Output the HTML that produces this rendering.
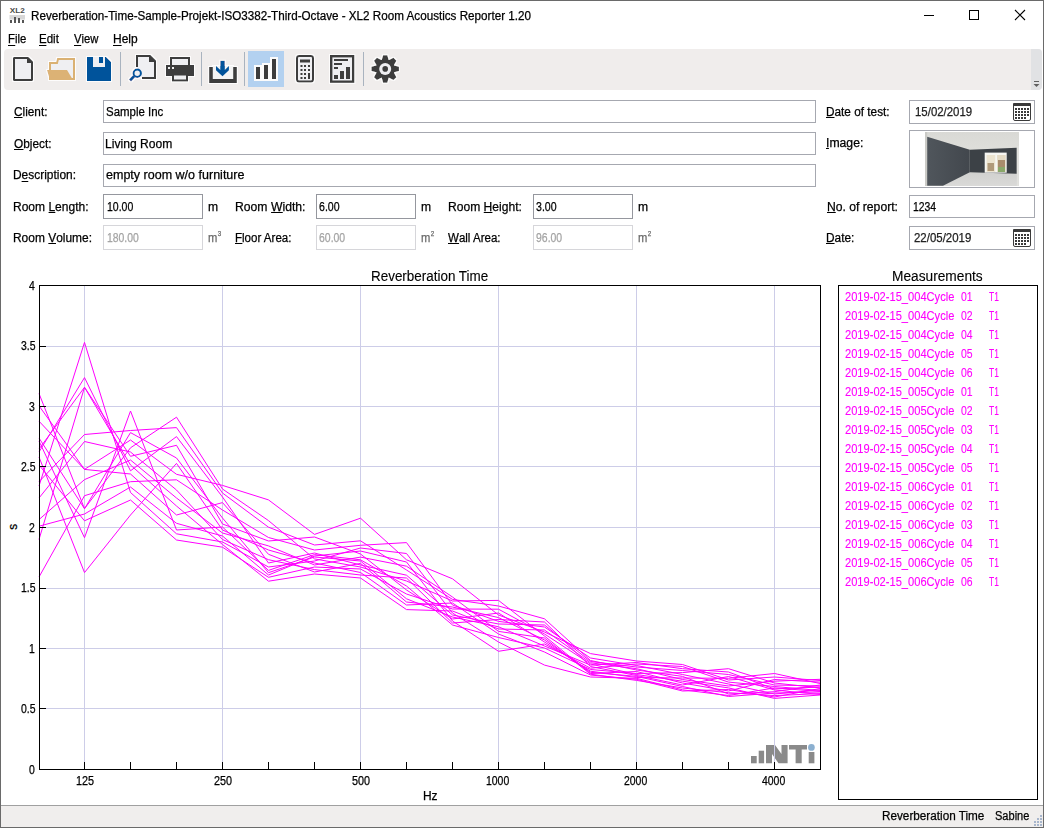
<!DOCTYPE html>
<html><head><meta charset="utf-8">
<style>
html,body{margin:0;padding:0;}
body{width:1044px;height:828px;position:relative;overflow:hidden;background:#fff;font-family:"Liberation Sans",sans-serif;color:#000;}
.a{position:absolute;}
.t{position:absolute;white-space:pre;transform-origin:0 0;-webkit-text-stroke:0.25px currentColor;}
u{text-decoration:none;position:relative;}
u:after{content:"";position:absolute;left:0;right:0;bottom:0.8px;height:1px;background:currentColor;}
.box{position:absolute;box-sizing:border-box;border:1px solid #b4b4bc;background:#fff;}
</style></head><body>

<svg class="a" style="left:0;top:0" width="1044" height="30">
  <text x="9.8" y="13.3" font-family="Liberation Sans" font-weight="bold" font-size="6.9" fill="#4a4a4a" textLength="15" lengthAdjust="spacingAndGlyphs">XL2</text>
  <rect x="9.5" y="15" width="15.5" height="4.6" fill="#d8d8d8"/>
  <rect x="10" y="20" width="2" height="3" fill="#555555"/>
  <rect x="14" y="17" width="2" height="6" fill="#555555"/>
  <rect x="18" y="18" width="2" height="5" fill="#555555"/>
  <rect x="22" y="20" width="2" height="3" fill="#555555"/>
  <rect x="924" y="15" width="10" height="1" fill="#000"/>
  <rect x="969.5" y="10.5" width="9" height="9" fill="none" stroke="#000" stroke-width="1"/>
  <path d="M1015 10 L1025 20 M1025 10 L1015 20" stroke="#000" stroke-width="1.1"/>
</svg>
<div class="t" style="left:31.00px;top:9.54px;font-size:12px;line-height:12px;color:#000;transform:scaleX(0.9720);">Reverberation-Time-Sample-Projekt-ISO3382-Third-Octave - XL2 Room Acoustics Reporter 1.20</div>
<div class="t" style="left:7.69px;top:33.42px;font-size:12.5px;line-height:12.5px;color:#000;transform:scaleX(0.9067);"><u>F</u>ile</div>
<div class="t" style="left:39.28px;top:33.42px;font-size:12.5px;line-height:12.5px;color:#000;transform:scaleX(0.9209);"><u>E</u>dit</div>
<div class="t" style="left:74.00px;top:33.42px;font-size:12.5px;line-height:12.5px;color:#000;transform:scaleX(0.9016);"><u>V</u>iew</div>
<div class="t" style="left:112.54px;top:33.42px;font-size:12.5px;line-height:12.5px;color:#000;transform:scaleX(0.9573);"><u>H</u>elp</div>
<div class="a" style="left:4px;top:49px;width:1038px;height:41px;background:#f0edec;border-radius:4px;overflow:hidden"><div class="a" style="right:0;top:0;width:11px;height:41px;background:#e1e2e4"></div></div>
<svg class="a" style="left:0;top:0" width="1044" height="95">
 <defs><filter id="halo" x="-20%" y="-20%" width="140%" height="140%"><feMorphology in="SourceAlpha" operator="dilate" radius="1.3" result="d"/><feGaussianBlur in="d" stdDeviation="0.7" result="b"/><feFlood flood-color="#ffffff" flood-opacity="0.85"/><feComposite in2="b" operator="in" result="w"/><feMerge><feMergeNode in="w"/><feMergeNode in="SourceGraphic"/></feMerge></filter></defs>
 <g filter="url(#halo)">
 <!-- new doc -->
 <path d="M14 58 H28 L32 62 V80 H14 Z" fill="#efeff2" stroke="#3c3c3c" stroke-width="2" stroke-linejoin="round"/>
 <path d="M27 57 L33 63 H27 Z" fill="#3c3c3c"/>
 <!-- folder -->
 <path d="M50 79 V63 H57 L58 59 H74 V79 Z" fill="#efeff2" stroke="#dab173" stroke-width="2"/>
 <path d="M47 70 H67 L73 80 H50 Z" fill="#dcb274"/>
 <!-- save -->
 <path d="M87 57 H106 L111 62 V81 H87 Z" fill="#00529b"/>
 <rect x="93" y="57" width="12" height="10" fill="#efeff2"/>
 <rect x="99" y="57" width="4" height="6" fill="#00529b"/>
 </g>
 <!-- separators -->
 <rect x="120" y="52" width="1" height="34" fill="#a9b3bf"/>
 <rect x="201" y="52" width="1" height="34" fill="#a9b3bf"/>
 <rect x="244" y="52" width="1" height="34" fill="#a9b3bf"/>
 <rect x="363" y="52" width="1" height="34" fill="#a9b3bf"/>
 <g filter="url(#halo)">
 <!-- preview -->
 <path d="M137 67 V56 H150 L155 61 V78 H142" fill="#efeff2" stroke="#3c3c3c" stroke-width="2"/>
 <path d="M149 55 L156 62 H149 Z" fill="#3c3c3c"/>
 <circle cx="137.2" cy="73.2" r="3.7" fill="#efeff2" stroke="#00529b" stroke-width="2"/>
 <path d="M134.3 76.1 L130 80.6" stroke="#00529b" stroke-width="2.9" stroke-linecap="butt"/>
 <!-- printer -->
 <rect x="171" y="58" width="18" height="8" fill="#efeff2" stroke="#3c3c3c" stroke-width="2"/>
 <rect x="166" y="65" width="28" height="11" fill="#3c3c3c"/>
 <rect x="173" y="74.5" width="14" height="6" fill="#efeff2" stroke="#3c3c3c" stroke-width="2"/>
 <rect x="168" y="67" width="2" height="2" fill="#f0f0f0"/>
 <rect x="172" y="67" width="2" height="2" fill="#f0f0f0"/>
 <!-- import -->
 <rect x="213" y="66" width="20" height="13" fill="#f4f4f4"/>
 <path d="M211 67 V81 H235 V67" fill="none" stroke="#3c3c3c" stroke-width="3.8"/>
 <path d="M220.3 60.8 H224.8 V70 L228.9 66 V70.3 L222.5 76.2 L216 70.3 V66 L220.3 70 Z" fill="#00529b"/>
 </g>
 <!-- selected chart button -->
 <rect x="248" y="51" width="36" height="36" fill="#b3d1f0"/>
 <path d="M254 65 H262 V63 H270 V57 H278 V81 H254 Z" fill="#fbfbfb"/>
 <rect x="256" y="67" width="4" height="12" fill="#3c3c3c"/>
 <rect x="264" y="65" width="4" height="14" fill="#3c3c3c"/>
 <rect x="272" y="59" width="4" height="20" fill="#3c3c3c"/>
 <g filter="url(#halo)">
 <!-- calculator -->
 <rect x="297" y="56" width="16" height="25.5" rx="2" fill="#efeff2" stroke="#3c3c3c" stroke-width="2"/>
 <rect x="300" y="59.5" width="10" height="3" fill="#3c3c3c"/>
 <g fill="#3c3c3c">
  <rect x="300.5" y="65" width="2" height="2"/><rect x="304" y="65" width="2" height="2"/><rect x="308" y="65" width="2" height="2"/>
  <rect x="300.5" y="69" width="2" height="2"/><rect x="304" y="69" width="2" height="2"/><rect x="308" y="69" width="2" height="2"/>
  <rect x="300.5" y="73" width="2" height="2"/><rect x="304" y="73" width="2" height="2"/><rect x="308" y="73" width="2" height="6"/>
  <rect x="300.5" y="77" width="2" height="2"/><rect x="304" y="77" width="2" height="2"/>
 </g>
 <!-- report -->
 <rect x="331.2" y="56.2" width="22" height="25.5" fill="#efeff2" stroke="#3c3c3c" stroke-width="2.4"/>
 <g fill="#3c3c3c">
  <rect x="334" y="59" width="14" height="2"/><rect x="334" y="63" width="8" height="2"/><rect x="334" y="67" width="4" height="2"/>
  <rect x="334" y="75" width="4" height="4"/><rect x="340" y="71" width="4" height="8"/><rect x="346" y="67" width="4" height="12"/>
 </g>
 <!-- gear -->
 <g transform="translate(385.2 68.9)">
  <path id="gear" fill="#3c3c3c" d="M-3.47 -8.95 L-2.08 -13.74 L2.08 -13.74 L3.47 -8.95 L3.87 -8.78 L8.25 -11.19 L11.19 -8.25 L8.78 -3.87 L8.95 -3.47 L13.74 -2.08 L13.74 2.08 L8.95 3.47 L8.78 3.87 L11.19 8.25 L8.25 11.19 L3.87 8.78 L3.47 8.95 L2.08 13.74 L-2.08 13.74 L-3.47 8.95 L-3.87 8.78 L-8.25 11.19 L-11.19 8.25 L-8.78 3.87 L-8.95 3.47 L-13.74 2.08 L-13.74 -2.08 L-8.95 -3.47 L-8.78 -3.87 L-11.19 -8.25 L-8.25 -11.19 L-3.87 -8.78 Z"/>
  <circle r="6" fill="#efeff2"/>
  <circle r="2.8" fill="#3c3c3c"/>
 </g>
 </g>
 <!-- overflow chevron -->
 <rect x="1034" y="81" width="5" height="1" fill="#606060"/>
 <path d="M1033.5 84 H1039.5 L1036.5 87 Z" fill="#606060"/>
</svg>
<div class="box" style="left:103px;top:100px;width:713px;height:23px;border-color:#a6a8b0"></div>
<div class="box" style="left:103px;top:132px;width:713px;height:23px;border-color:#a6a8b0"></div>
<div class="box" style="left:103px;top:164px;width:713px;height:23px;border-color:#a6a8b0"></div>
<div class="box" style="left:103px;top:194px;width:100px;height:25px;border-color:#95979e"></div>
<div class="box" style="left:316px;top:194px;width:100px;height:25px;border-color:#95979e"></div>
<div class="box" style="left:533px;top:194px;width:100px;height:25px;border-color:#95979e"></div>
<div class="box" style="left:103px;top:225px;width:100px;height:25px;border-color:#d6d6da"></div>
<div class="box" style="left:316px;top:225px;width:100px;height:25px;border-color:#d6d6da"></div>
<div class="box" style="left:533px;top:225px;width:100px;height:25px;border-color:#d6d6da"></div>
<div class="box" style="left:909px;top:100px;width:126px;height:24px;border-color:#a6a8b0"></div>
<div class="box" style="left:909px;top:130px;width:126px;height:58px;border-color:#a6a8b0"></div>
<div class="box" style="left:909px;top:195px;width:126px;height:23px;border-color:#a6a8b0"></div>
<div class="box" style="left:909px;top:226px;width:126px;height:24px;border-color:#a6a8b0"></div>
<div class="t" style="left:14.30px;top:105.62px;font-size:12.5px;line-height:12.5px;color:#000;transform:scaleX(0.9440);"><u>C</u>lient:</div>
<div class="t" style="left:14.30px;top:137.52px;font-size:12.5px;line-height:12.5px;color:#000;transform:scaleX(0.9456);"><u>O</u>bject:</div>
<div class="t" style="left:13.35px;top:169.42px;font-size:12.5px;line-height:12.5px;color:#000;transform:scaleX(0.9547);">D<u>e</u>scription:</div>
<div class="t" style="left:13.34px;top:200.62px;font-size:12.5px;line-height:12.5px;color:#000;transform:scaleX(0.9617);">Room <u>L</u>ength:</div>
<div class="t" style="left:13.34px;top:231.62px;font-size:12.5px;line-height:12.5px;color:#000;transform:scaleX(0.9552);">Room <u>V</u>olume:</div>
<div class="t" style="left:207.50px;top:200.62px;font-size:12.5px;line-height:12.5px;color:#000;transform:scaleX(0.9700);">m</div>
<div class="t" style="left:207.50px;top:231.62px;font-size:12.5px;line-height:12.5px;color:#6a6a6a;transform:scaleX(0.8950);">m<span style="font-size:7px;position:relative;top:-5.6px;left:0.6px">3</span></div>
<div class="t" style="left:234.62px;top:200.62px;font-size:12.5px;line-height:12.5px;color:#000;transform:scaleX(0.9750);">Room <u>W</u>idth:</div>
<div class="t" style="left:234.68px;top:231.62px;font-size:12.5px;line-height:12.5px;color:#000;transform:scaleX(0.9229);"><u>F</u>loor Area:</div>
<div class="t" style="left:420.70px;top:200.62px;font-size:12.5px;line-height:12.5px;color:#000;transform:scaleX(0.9700);">m</div>
<div class="t" style="left:420.70px;top:231.62px;font-size:12.5px;line-height:12.5px;color:#6a6a6a;transform:scaleX(0.8950);">m<span style="font-size:7px;position:relative;top:-5.6px;left:0.6px">2</span></div>
<div class="t" style="left:447.73px;top:200.62px;font-size:12.5px;line-height:12.5px;color:#000;transform:scaleX(0.9660);">Room <u>H</u>eight:</div>
<div class="t" style="left:448.40px;top:231.62px;font-size:12.5px;line-height:12.5px;color:#000;transform:scaleX(0.9221);"><u>W</u>all Area:</div>
<div class="t" style="left:637.70px;top:200.62px;font-size:12.5px;line-height:12.5px;color:#000;transform:scaleX(0.9700);">m</div>
<div class="t" style="left:637.70px;top:231.62px;font-size:12.5px;line-height:12.5px;color:#6a6a6a;transform:scaleX(0.8950);">m<span style="font-size:7px;position:relative;top:-5.6px;left:0.6px">2</span></div>
<div class="t" style="left:826.16px;top:105.62px;font-size:12.5px;line-height:12.5px;color:#000;transform:scaleX(0.9435);"><u>D</u>ate of test:</div>
<div class="t" style="left:825.82px;top:137.22px;font-size:12.5px;line-height:12.5px;color:#000;transform:scaleX(0.9771);"><u>I</u>mage:</div>
<div class="t" style="left:826.53px;top:200.62px;font-size:12.5px;line-height:12.5px;color:#000;transform:scaleX(0.9724);"><u>N</u>o. of report:</div>
<div class="t" style="left:825.85px;top:231.62px;font-size:12.5px;line-height:12.5px;color:#000;transform:scaleX(0.9471);"><u>D</u>ate:</div>
<div class="t" style="left:106.10px;top:105.62px;font-size:12.5px;line-height:12.5px;color:#000;transform:scaleX(0.9152);">Sample Inc</div>
<div class="t" style="left:105.13px;top:137.52px;font-size:12.5px;line-height:12.5px;color:#000;transform:scaleX(0.9682);">Living Room</div>
<div class="t" style="left:106.30px;top:169.42px;font-size:12.5px;line-height:12.5px;color:#000;transform:scaleX(1.0015);">empty room w/o furniture</div>
<div class="t" style="left:106.80px;top:200.62px;font-size:12.5px;line-height:12.5px;color:#000;transform:scaleX(0.8395);">10.00</div>
<div class="t" style="left:319.30px;top:200.62px;font-size:12.5px;line-height:12.5px;color:#000;transform:scaleX(0.8451);">6.00</div>
<div class="t" style="left:536.30px;top:200.62px;font-size:12.5px;line-height:12.5px;color:#000;transform:scaleX(0.8451);">3.00</div>
<div class="t" style="left:106.80px;top:231.62px;font-size:12.5px;line-height:12.5px;color:#a4a4a4;transform:scaleX(0.8307);">180.00</div>
<div class="t" style="left:319.30px;top:231.62px;font-size:12.5px;line-height:12.5px;color:#a4a4a4;transform:scaleX(0.8363);">60.00</div>
<div class="t" style="left:536.30px;top:231.62px;font-size:12.5px;line-height:12.5px;color:#a4a4a4;transform:scaleX(0.8363);">96.00</div>
<div class="t" style="left:914.50px;top:105.62px;font-size:12.5px;line-height:12.5px;color:#222;transform:scaleX(0.9136);">15/02/2019</div>
<div class="t" style="left:912.70px;top:200.62px;font-size:12.5px;line-height:12.5px;color:#000;transform:scaleX(0.8329);">1234</div>
<div class="t" style="left:914.40px;top:231.62px;font-size:12.5px;line-height:12.5px;color:#222;transform:scaleX(0.9152);">22/05/2019</div>
<svg class="a" style="left:1013px;top:103px" width="19" height="19"><rect x="0.5" y="0.5" width="17" height="17" rx="1.5" fill="#fff" stroke="#3a3a3a" stroke-width="1"/><rect x="0" y="0" width="18" height="3" rx="1" fill="#3a3a3a"/><rect x="2" y="5" width="2" height="2" fill="#3a3a3a"/><rect x="5" y="5" width="2" height="2" fill="#3a3a3a"/><rect x="8" y="5" width="2" height="2" fill="#3a3a3a"/><rect x="11" y="5" width="2" height="2" fill="#3a3a3a"/><rect x="14" y="5" width="2" height="2" fill="#3a3a3a"/><rect x="2" y="8" width="2" height="2" fill="#3a3a3a"/><rect x="5" y="8" width="2" height="2" fill="#3a3a3a"/><rect x="8" y="8" width="2" height="2" fill="#3a3a3a"/><rect x="11" y="8" width="2" height="2" fill="#3a3a3a"/><rect x="14" y="8" width="2" height="2" fill="#3a3a3a"/><rect x="2" y="11" width="2" height="2" fill="#3a3a3a"/><rect x="5" y="11" width="2" height="2" fill="#3a3a3a"/><rect x="8" y="11" width="2" height="2" fill="#3a3a3a"/><rect x="11" y="11" width="2" height="2" fill="#3a3a3a"/><rect x="14" y="11" width="2" height="2" fill="#3a3a3a"/><rect x="2" y="14" width="2" height="2" fill="#3a3a3a"/><rect x="5" y="14" width="2" height="2" fill="#3a3a3a"/><rect x="8" y="14" width="2" height="2" fill="#3a3a3a"/><rect x="11" y="14" width="2" height="2" fill="#3a3a3a"/></svg>
<svg class="a" style="left:1013px;top:229px" width="19" height="19"><rect x="0.5" y="0.5" width="17" height="17" rx="1.5" fill="#fff" stroke="#3a3a3a" stroke-width="1"/><rect x="0" y="0" width="18" height="3" rx="1" fill="#3a3a3a"/><rect x="2" y="5" width="2" height="2" fill="#3a3a3a"/><rect x="5" y="5" width="2" height="2" fill="#3a3a3a"/><rect x="8" y="5" width="2" height="2" fill="#3a3a3a"/><rect x="11" y="5" width="2" height="2" fill="#3a3a3a"/><rect x="14" y="5" width="2" height="2" fill="#3a3a3a"/><rect x="2" y="8" width="2" height="2" fill="#3a3a3a"/><rect x="5" y="8" width="2" height="2" fill="#3a3a3a"/><rect x="8" y="8" width="2" height="2" fill="#3a3a3a"/><rect x="11" y="8" width="2" height="2" fill="#3a3a3a"/><rect x="14" y="8" width="2" height="2" fill="#3a3a3a"/><rect x="2" y="11" width="2" height="2" fill="#3a3a3a"/><rect x="5" y="11" width="2" height="2" fill="#3a3a3a"/><rect x="8" y="11" width="2" height="2" fill="#3a3a3a"/><rect x="11" y="11" width="2" height="2" fill="#3a3a3a"/><rect x="14" y="11" width="2" height="2" fill="#3a3a3a"/><rect x="2" y="14" width="2" height="2" fill="#3a3a3a"/><rect x="5" y="14" width="2" height="2" fill="#3a3a3a"/><rect x="8" y="14" width="2" height="2" fill="#3a3a3a"/><rect x="11" y="14" width="2" height="2" fill="#3a3a3a"/></svg>
<svg class="a" style="left:925px;top:132px" width="94" height="54">
 <defs>
  <linearGradient id="lw" x1="0" x2="1" y1="0" y2="0"><stop offset="0" stop-color="#50565c"/><stop offset="1" stop-color="#42474d"/></linearGradient>
  <linearGradient id="cl" x1="0" x2="0" y1="0" y2="1"><stop offset="0" stop-color="#d9d9d5"/><stop offset="1" stop-color="#e9e9e5"/></linearGradient>
  <linearGradient id="fl" x1="0" x2="0" y1="0" y2="1"><stop offset="0" stop-color="#cfcfcd"/><stop offset="1" stop-color="#dadad8"/></linearGradient>
 </defs>
 <rect width="94" height="54" fill="url(#cl)"/>
 <rect x="0" y="38" width="94" height="16" fill="url(#fl)"/>
 <rect x="0" y="0" width="2.2" height="54" fill="#cacac6"/>
 <path d="M2.2 4.8 L44.8 17.7 L44.8 40.2 L18 53.8 L2.2 53.8 Z" fill="url(#lw)"/>
 <path d="M44.8 17.7 L91.8 15.8 L91.8 41.7 L44.8 40.2 Z" fill="#3c4146"/>
 <rect x="59.7" y="20.6" width="22" height="20.1" fill="#f6f6f2"/>
 <rect x="61.6" y="23" width="8.6" height="17" fill="#ece4d0"/>
 <rect x="72.1" y="23" width="8.6" height="17" fill="#e4dac4"/>
 <rect x="62.5" y="31" width="6.5" height="8" fill="#b09a7a"/>
 <rect x="73" y="28" width="7" height="7" fill="#a88c6c"/>
 <rect x="73" y="35" width="7" height="5" fill="#8aa86a"/>
 <rect x="91.8" y="14" width="2" height="40" fill="#e2e2de"/>
</svg>
<svg class="a" style="left:0;top:0" width="1044" height="828">
<g fill="#8a8a8a">
 <rect x="751" y="756" width="5.7" height="7.3"/>
 <rect x="758.7" y="750.7" width="5.4" height="12.6"/>
 <path d="M766 745 H775 L781.5 754 V745 H787.6 V763.3 H778.5 L772 754 V763.3 H766 Z"/>
 <path d="M789 745 H807 V749.6 H801.7 V763.3 H795.6 V749.6 H789 Z"/>
 <rect x="808.7" y="752" width="5.7" height="11.3"/>
</g>
<circle cx="811.4" cy="747.4" r="3.35" fill="#8cb0d0"/>
<line x1="45" y1="708.5" x2="820" y2="708.5" stroke="#cdcde8" stroke-width="1"/>
<line x1="45" y1="648.5" x2="820" y2="648.5" stroke="#cdcde8" stroke-width="1"/>
<line x1="45" y1="588.5" x2="820" y2="588.5" stroke="#cdcde8" stroke-width="1"/>
<line x1="45" y1="527.5" x2="820" y2="527.5" stroke="#cdcde8" stroke-width="1"/>
<line x1="45" y1="466.5" x2="820" y2="466.5" stroke="#cdcde8" stroke-width="1"/>
<line x1="45" y1="406.5" x2="820" y2="406.5" stroke="#cdcde8" stroke-width="1"/>
<line x1="45" y1="346.5" x2="820" y2="346.5" stroke="#cdcde8" stroke-width="1"/>
<line x1="84.5" y1="285" x2="84.5" y2="762" stroke="#cdcde8" stroke-width="1"/>
<line x1="222.5" y1="285" x2="222.5" y2="762" stroke="#cdcde8" stroke-width="1"/>
<line x1="360.5" y1="285" x2="360.5" y2="762" stroke="#cdcde8" stroke-width="1"/>
<line x1="498.5" y1="285" x2="498.5" y2="762" stroke="#cdcde8" stroke-width="1"/>
<line x1="636.5" y1="285" x2="636.5" y2="762" stroke="#cdcde8" stroke-width="1"/>
<line x1="774.5" y1="285" x2="774.5" y2="762" stroke="#cdcde8" stroke-width="1"/>
<polyline points="39.00,486.00 84.50,342.40 130.50,492.50 176.50,533.80 222.50,542.00 268.50,567.00 314.50,561.00 360.50,548.00 406.50,553.50 452.50,613.00 498.50,642.00 544.50,665.10 590.50,677.00 636.50,678.30 682.50,689.80 728.50,695.50 774.50,687.90 820.00,691.50" fill="none" stroke="#ff00ff" stroke-width="1"/>
<polyline points="39.00,452.00 84.50,377.60 130.50,470.80 176.50,436.60 222.50,497.00 268.50,563.00 314.50,553.00 360.50,565.00 406.50,575.20 452.50,615.00 498.50,624.00 544.50,625.00 590.50,661.50 636.50,667.00 682.50,670.50 728.50,674.50 774.50,685.00 820.00,686.00" fill="none" stroke="#ff00ff" stroke-width="1"/>
<polyline points="39.00,449.00 84.50,387.30 130.50,465.00 176.50,506.00 222.50,544.50 268.50,581.20 314.50,574.00 360.50,578.00 406.50,609.60 452.50,611.00 498.50,629.00 544.50,630.00 590.50,662.80 636.50,668.70 682.50,679.50 728.50,686.00 774.50,681.20 820.00,679.30" fill="none" stroke="#ff00ff" stroke-width="1"/>
<polyline points="39.00,539.50 84.50,387.30 130.50,456.30 176.50,445.30 222.50,524.00 268.50,541.00 314.50,537.00 360.50,554.00 406.50,590.00 452.50,619.00 498.50,613.00 544.50,642.00 590.50,671.20 636.50,677.50 682.50,678.00 728.50,678.30 774.50,673.50 820.00,683.50" fill="none" stroke="#ff00ff" stroke-width="1"/>
<polyline points="39.00,393.50 84.50,508.70 130.50,432.60 176.50,458.00 222.50,518.00 268.50,572.70 314.50,557.00 360.50,561.00 406.50,598.80 452.50,617.00 498.50,626.80 544.50,646.00 590.50,665.10 636.50,662.50 682.50,668.70 728.50,672.00 774.50,689.00 820.00,687.00" fill="none" stroke="#ff00ff" stroke-width="1"/>
<polyline points="39.00,405.80 84.50,469.40 130.50,440.00 176.50,474.30 222.50,485.40 268.50,499.90 314.50,534.40 360.50,518.20 406.50,559.80 452.50,578.80 498.50,615.00 544.50,632.00 590.50,653.60 636.50,661.00 682.50,664.50 728.50,680.00 774.50,677.00 820.00,680.50" fill="none" stroke="#ff00ff" stroke-width="1"/>
<polyline points="39.00,421.20 84.50,469.40 130.50,474.00 176.50,515.00 222.50,502.60 268.50,554.30 314.50,572.00 360.50,563.40 406.50,602.00 452.50,607.00 498.50,617.60 544.50,640.00 590.50,672.30 636.50,676.40 682.50,686.50 728.50,696.50 774.50,693.00 820.00,692.00" fill="none" stroke="#ff00ff" stroke-width="1"/>
<polyline points="39.00,438.00 84.50,508.70 130.50,447.80 176.50,417.20 222.50,489.00 268.50,520.60 314.50,558.90 360.50,567.00 406.50,581.00 452.50,601.00 498.50,600.40 544.50,636.00 590.50,673.50 636.50,671.50 682.50,683.00 728.50,691.00 774.50,679.50 820.00,682.10" fill="none" stroke="#ff00ff" stroke-width="1"/>
<polyline points="39.00,481.70 84.50,434.50 130.50,430.50 176.50,427.60 222.50,493.00 268.50,527.20 314.50,545.00 360.50,540.80 406.50,570.00 452.50,599.40 498.50,606.00 544.50,618.80 590.50,660.50 636.50,670.00 682.50,676.40 728.50,694.00 774.50,691.70 820.00,685.00" fill="none" stroke="#ff00ff" stroke-width="1"/>
<polyline points="39.00,498.00 84.50,441.50 130.50,452.00 176.50,490.00 222.50,539.50 268.50,559.70 314.50,569.60 360.50,575.00 406.50,578.00 452.50,623.00 498.50,619.50 544.50,622.00 590.50,666.50 636.50,675.50 682.50,685.00 728.50,676.50 774.50,690.00 820.00,694.50" fill="none" stroke="#ff00ff" stroke-width="1"/>
<polyline points="39.00,577.00 84.50,495.70 130.50,481.70 176.50,479.80 222.50,510.00 268.50,537.50 314.50,550.00 360.50,545.30 406.50,542.60 452.50,605.00 498.50,621.40 544.50,627.00 590.50,658.00 636.50,665.50 682.50,674.50 728.50,684.00 774.50,694.00 820.00,689.80" fill="none" stroke="#ff00ff" stroke-width="1"/>
<polyline points="39.00,457.00 84.50,572.60 130.50,515.00 176.50,463.40 222.50,530.00 268.50,550.00 314.50,563.00 360.50,572.50 406.50,605.00 452.50,603.00 498.50,634.00 544.50,652.00 590.50,675.00 636.50,679.30 682.50,691.00 728.50,689.50 774.50,697.00 820.00,688.50" fill="none" stroke="#ff00ff" stroke-width="1"/>
<polyline points="39.00,441.00 84.50,537.70 130.50,411.00 176.50,530.00 222.50,527.00 268.50,570.40 314.50,554.60 360.50,559.80 406.50,586.00 452.50,625.00 498.50,637.50 544.50,648.00 590.50,669.50 636.50,673.50 682.50,672.60 728.50,668.70 774.50,683.00 820.00,687.90" fill="none" stroke="#ff00ff" stroke-width="1"/>
<polyline points="39.00,519.60 84.50,479.60 130.50,460.00 176.50,498.00 222.50,533.00 268.50,545.90 314.50,565.00 360.50,557.10 406.50,566.20 452.50,597.00 498.50,631.40 544.50,638.00 590.50,674.20 636.50,680.40 682.50,688.00 728.50,692.70 774.50,695.60 820.00,693.60" fill="none" stroke="#ff00ff" stroke-width="1"/>
<polyline points="39.00,526.20 84.50,514.00 130.50,487.00 176.50,523.30 222.50,536.00 268.50,575.00 314.50,556.00 360.50,551.00 406.50,562.00 452.50,621.00 498.50,651.30 544.50,644.00 590.50,668.20 636.50,664.00 682.50,666.50 728.50,682.10 774.50,686.50 820.00,690.50" fill="none" stroke="#ff00ff" stroke-width="1"/>
<polyline points="39.00,465.00 84.50,520.80 130.50,500.00 176.50,540.00 222.50,547.20 268.50,577.30 314.50,567.00 360.50,569.00 406.50,594.00 452.50,609.00 498.50,609.20 544.50,634.00 590.50,664.00 636.50,674.50 682.50,681.20 728.50,687.90 774.50,698.40 820.00,695.00" fill="none" stroke="#ff00ff" stroke-width="1"/>
<rect x="39.5" y="285.5" width="781" height="484" fill="none" stroke="#000" stroke-width="1"/>
<line x1="39" y1="708.5" x2="46" y2="708.5" stroke="#000" stroke-width="1"/>
<line x1="39" y1="648.5" x2="46" y2="648.5" stroke="#000" stroke-width="1"/>
<line x1="39" y1="588.5" x2="46" y2="588.5" stroke="#000" stroke-width="1"/>
<line x1="39" y1="527.5" x2="46" y2="527.5" stroke="#000" stroke-width="1"/>
<line x1="39" y1="466.5" x2="46" y2="466.5" stroke="#000" stroke-width="1"/>
<line x1="39" y1="406.5" x2="46" y2="406.5" stroke="#000" stroke-width="1"/>
<line x1="39" y1="346.5" x2="46" y2="346.5" stroke="#000" stroke-width="1"/>
<line x1="84.5" y1="762" x2="84.5" y2="769" stroke="#000" stroke-width="1"/>
<line x1="130.5" y1="762" x2="130.5" y2="769" stroke="#000" stroke-width="1"/>
<line x1="176.5" y1="762" x2="176.5" y2="769" stroke="#000" stroke-width="1"/>
<line x1="222.5" y1="762" x2="222.5" y2="769" stroke="#000" stroke-width="1"/>
<line x1="268.5" y1="762" x2="268.5" y2="769" stroke="#000" stroke-width="1"/>
<line x1="314.5" y1="762" x2="314.5" y2="769" stroke="#000" stroke-width="1"/>
<line x1="360.5" y1="762" x2="360.5" y2="769" stroke="#000" stroke-width="1"/>
<line x1="406.5" y1="762" x2="406.5" y2="769" stroke="#000" stroke-width="1"/>
<line x1="452.5" y1="762" x2="452.5" y2="769" stroke="#000" stroke-width="1"/>
<line x1="498.5" y1="762" x2="498.5" y2="769" stroke="#000" stroke-width="1"/>
<line x1="544.5" y1="762" x2="544.5" y2="769" stroke="#000" stroke-width="1"/>
<line x1="590.5" y1="762" x2="590.5" y2="769" stroke="#000" stroke-width="1"/>
<line x1="636.5" y1="762" x2="636.5" y2="769" stroke="#000" stroke-width="1"/>
<line x1="682.5" y1="762" x2="682.5" y2="769" stroke="#000" stroke-width="1"/>
<line x1="728.5" y1="762" x2="728.5" y2="769" stroke="#000" stroke-width="1"/>
<line x1="774.5" y1="762" x2="774.5" y2="769" stroke="#000" stroke-width="1"/>
<rect x="838.5" y="285.5" width="199" height="514" fill="none" stroke="#000" stroke-width="1"/>
</svg>
<div class="t" style="left:29.21px;top:763.84px;font-size:12px;line-height:12px;color:#000;transform:scaleX(0.8700);">0</div>
<div class="t" style="left:20.50px;top:703.34px;font-size:12px;line-height:12px;color:#000;transform:scaleX(0.8700);">0.5</div>
<div class="t" style="left:29.21px;top:642.84px;font-size:12px;line-height:12px;color:#000;transform:scaleX(0.8700);">1</div>
<div class="t" style="left:20.50px;top:582.34px;font-size:12px;line-height:12px;color:#000;transform:scaleX(0.8700);">1.5</div>
<div class="t" style="left:29.21px;top:521.84px;font-size:12px;line-height:12px;color:#000;transform:scaleX(0.8700);">2</div>
<div class="t" style="left:20.50px;top:461.34px;font-size:12px;line-height:12px;color:#000;transform:scaleX(0.8700);">2.5</div>
<div class="t" style="left:29.21px;top:400.84px;font-size:12px;line-height:12px;color:#000;transform:scaleX(0.8700);">3</div>
<div class="t" style="left:20.50px;top:340.34px;font-size:12px;line-height:12px;color:#000;transform:scaleX(0.8700);">3.5</div>
<div class="t" style="left:29.21px;top:279.84px;font-size:12px;line-height:12px;color:#000;transform:scaleX(0.8700);">4</div>
<div class="t" style="left:76.34px;top:774.74px;font-size:12px;line-height:12px;color:#000;transform:scaleX(0.9000);">125</div>
<div class="t" style="left:214.34px;top:774.74px;font-size:12px;line-height:12px;color:#000;transform:scaleX(0.9000);">250</div>
<div class="t" style="left:352.34px;top:774.74px;font-size:12px;line-height:12px;color:#000;transform:scaleX(0.9000);">500</div>
<div class="t" style="left:486.45px;top:774.74px;font-size:12px;line-height:12px;color:#000;transform:scaleX(0.8700);">1000</div>
<div class="t" style="left:624.45px;top:774.74px;font-size:12px;line-height:12px;color:#000;transform:scaleX(0.8700);">2000</div>
<div class="t" style="left:762.45px;top:774.74px;font-size:12px;line-height:12px;color:#000;transform:scaleX(0.8700);">4000</div>
<div class="t" style="left:422.64px;top:790.22px;font-size:12.5px;line-height:12.5px;color:#000;transform:scaleX(0.9553);">Hz</div>
<div class="t" style="left:8px;top:521px;font-size:12.5px;line-height:12.5px;transform:rotate(-90deg) scaleX(0.94);transform-origin:4px 5px">s</div>
<div class="t" style="left:370.84px;top:269.05px;font-size:14px;line-height:14px;color:#000;transform:scaleX(0.9595);-webkit-text-stroke:0.12px #000;">Reverberation Time</div>
<div class="t" style="left:891.62px;top:268.65px;font-size:14px;line-height:14px;color:#000;transform:scaleX(0.9793);-webkit-text-stroke:0.12px #000;">Measurements</div>
<div class="t" style="left:845.00px;top:290.94px;font-size:12px;line-height:12px;color:#ff00ff;transform:scaleX(0.9264);-webkit-text-stroke:0.1px #ff00ff;">2019-02-15_004Cycle</div>
<div class="t" style="left:960.70px;top:290.94px;font-size:12px;line-height:12px;color:#ff00ff;transform:scaleX(0.8700);-webkit-text-stroke:0.1px #ff00ff;">01</div>
<div class="t" style="left:988.90px;top:290.94px;font-size:12px;line-height:12px;color:#ff00ff;transform:scaleX(0.7048);-webkit-text-stroke:0.1px #ff00ff;">T1</div>
<div class="t" style="left:845.00px;top:309.94px;font-size:12px;line-height:12px;color:#ff00ff;transform:scaleX(0.9264);-webkit-text-stroke:0.1px #ff00ff;">2019-02-15_004Cycle</div>
<div class="t" style="left:960.70px;top:309.94px;font-size:12px;line-height:12px;color:#ff00ff;transform:scaleX(0.8700);-webkit-text-stroke:0.1px #ff00ff;">02</div>
<div class="t" style="left:988.90px;top:309.94px;font-size:12px;line-height:12px;color:#ff00ff;transform:scaleX(0.7048);-webkit-text-stroke:0.1px #ff00ff;">T1</div>
<div class="t" style="left:845.00px;top:328.94px;font-size:12px;line-height:12px;color:#ff00ff;transform:scaleX(0.9264);-webkit-text-stroke:0.1px #ff00ff;">2019-02-15_004Cycle</div>
<div class="t" style="left:960.70px;top:328.94px;font-size:12px;line-height:12px;color:#ff00ff;transform:scaleX(0.8700);-webkit-text-stroke:0.1px #ff00ff;">04</div>
<div class="t" style="left:988.90px;top:328.94px;font-size:12px;line-height:12px;color:#ff00ff;transform:scaleX(0.7048);-webkit-text-stroke:0.1px #ff00ff;">T1</div>
<div class="t" style="left:845.00px;top:347.94px;font-size:12px;line-height:12px;color:#ff00ff;transform:scaleX(0.9264);-webkit-text-stroke:0.1px #ff00ff;">2019-02-15_004Cycle</div>
<div class="t" style="left:960.70px;top:347.94px;font-size:12px;line-height:12px;color:#ff00ff;transform:scaleX(0.8700);-webkit-text-stroke:0.1px #ff00ff;">05</div>
<div class="t" style="left:988.90px;top:347.94px;font-size:12px;line-height:12px;color:#ff00ff;transform:scaleX(0.7048);-webkit-text-stroke:0.1px #ff00ff;">T1</div>
<div class="t" style="left:845.00px;top:366.94px;font-size:12px;line-height:12px;color:#ff00ff;transform:scaleX(0.9264);-webkit-text-stroke:0.1px #ff00ff;">2019-02-15_004Cycle</div>
<div class="t" style="left:960.70px;top:366.94px;font-size:12px;line-height:12px;color:#ff00ff;transform:scaleX(0.8700);-webkit-text-stroke:0.1px #ff00ff;">06</div>
<div class="t" style="left:988.90px;top:366.94px;font-size:12px;line-height:12px;color:#ff00ff;transform:scaleX(0.7048);-webkit-text-stroke:0.1px #ff00ff;">T1</div>
<div class="t" style="left:845.00px;top:385.94px;font-size:12px;line-height:12px;color:#ff00ff;transform:scaleX(0.9264);-webkit-text-stroke:0.1px #ff00ff;">2019-02-15_005Cycle</div>
<div class="t" style="left:960.70px;top:385.94px;font-size:12px;line-height:12px;color:#ff00ff;transform:scaleX(0.8700);-webkit-text-stroke:0.1px #ff00ff;">01</div>
<div class="t" style="left:988.90px;top:385.94px;font-size:12px;line-height:12px;color:#ff00ff;transform:scaleX(0.7048);-webkit-text-stroke:0.1px #ff00ff;">T1</div>
<div class="t" style="left:845.00px;top:404.94px;font-size:12px;line-height:12px;color:#ff00ff;transform:scaleX(0.9264);-webkit-text-stroke:0.1px #ff00ff;">2019-02-15_005Cycle</div>
<div class="t" style="left:960.70px;top:404.94px;font-size:12px;line-height:12px;color:#ff00ff;transform:scaleX(0.8700);-webkit-text-stroke:0.1px #ff00ff;">02</div>
<div class="t" style="left:988.90px;top:404.94px;font-size:12px;line-height:12px;color:#ff00ff;transform:scaleX(0.7048);-webkit-text-stroke:0.1px #ff00ff;">T1</div>
<div class="t" style="left:845.00px;top:423.94px;font-size:12px;line-height:12px;color:#ff00ff;transform:scaleX(0.9264);-webkit-text-stroke:0.1px #ff00ff;">2019-02-15_005Cycle</div>
<div class="t" style="left:960.70px;top:423.94px;font-size:12px;line-height:12px;color:#ff00ff;transform:scaleX(0.8700);-webkit-text-stroke:0.1px #ff00ff;">03</div>
<div class="t" style="left:988.90px;top:423.94px;font-size:12px;line-height:12px;color:#ff00ff;transform:scaleX(0.7048);-webkit-text-stroke:0.1px #ff00ff;">T1</div>
<div class="t" style="left:845.00px;top:442.94px;font-size:12px;line-height:12px;color:#ff00ff;transform:scaleX(0.9264);-webkit-text-stroke:0.1px #ff00ff;">2019-02-15_005Cycle</div>
<div class="t" style="left:960.70px;top:442.94px;font-size:12px;line-height:12px;color:#ff00ff;transform:scaleX(0.8700);-webkit-text-stroke:0.1px #ff00ff;">04</div>
<div class="t" style="left:988.90px;top:442.94px;font-size:12px;line-height:12px;color:#ff00ff;transform:scaleX(0.7048);-webkit-text-stroke:0.1px #ff00ff;">T1</div>
<div class="t" style="left:845.00px;top:461.94px;font-size:12px;line-height:12px;color:#ff00ff;transform:scaleX(0.9264);-webkit-text-stroke:0.1px #ff00ff;">2019-02-15_005Cycle</div>
<div class="t" style="left:960.70px;top:461.94px;font-size:12px;line-height:12px;color:#ff00ff;transform:scaleX(0.8700);-webkit-text-stroke:0.1px #ff00ff;">05</div>
<div class="t" style="left:988.90px;top:461.94px;font-size:12px;line-height:12px;color:#ff00ff;transform:scaleX(0.7048);-webkit-text-stroke:0.1px #ff00ff;">T1</div>
<div class="t" style="left:845.00px;top:480.94px;font-size:12px;line-height:12px;color:#ff00ff;transform:scaleX(0.9264);-webkit-text-stroke:0.1px #ff00ff;">2019-02-15_006Cycle</div>
<div class="t" style="left:960.70px;top:480.94px;font-size:12px;line-height:12px;color:#ff00ff;transform:scaleX(0.8700);-webkit-text-stroke:0.1px #ff00ff;">01</div>
<div class="t" style="left:988.90px;top:480.94px;font-size:12px;line-height:12px;color:#ff00ff;transform:scaleX(0.7048);-webkit-text-stroke:0.1px #ff00ff;">T1</div>
<div class="t" style="left:845.00px;top:499.94px;font-size:12px;line-height:12px;color:#ff00ff;transform:scaleX(0.9264);-webkit-text-stroke:0.1px #ff00ff;">2019-02-15_006Cycle</div>
<div class="t" style="left:960.70px;top:499.94px;font-size:12px;line-height:12px;color:#ff00ff;transform:scaleX(0.8700);-webkit-text-stroke:0.1px #ff00ff;">02</div>
<div class="t" style="left:988.90px;top:499.94px;font-size:12px;line-height:12px;color:#ff00ff;transform:scaleX(0.7048);-webkit-text-stroke:0.1px #ff00ff;">T1</div>
<div class="t" style="left:845.00px;top:518.94px;font-size:12px;line-height:12px;color:#ff00ff;transform:scaleX(0.9264);-webkit-text-stroke:0.1px #ff00ff;">2019-02-15_006Cycle</div>
<div class="t" style="left:960.70px;top:518.94px;font-size:12px;line-height:12px;color:#ff00ff;transform:scaleX(0.8700);-webkit-text-stroke:0.1px #ff00ff;">03</div>
<div class="t" style="left:988.90px;top:518.94px;font-size:12px;line-height:12px;color:#ff00ff;transform:scaleX(0.7048);-webkit-text-stroke:0.1px #ff00ff;">T1</div>
<div class="t" style="left:845.00px;top:537.94px;font-size:12px;line-height:12px;color:#ff00ff;transform:scaleX(0.9264);-webkit-text-stroke:0.1px #ff00ff;">2019-02-15_006Cycle</div>
<div class="t" style="left:960.70px;top:537.94px;font-size:12px;line-height:12px;color:#ff00ff;transform:scaleX(0.8700);-webkit-text-stroke:0.1px #ff00ff;">04</div>
<div class="t" style="left:988.90px;top:537.94px;font-size:12px;line-height:12px;color:#ff00ff;transform:scaleX(0.7048);-webkit-text-stroke:0.1px #ff00ff;">T1</div>
<div class="t" style="left:845.00px;top:556.94px;font-size:12px;line-height:12px;color:#ff00ff;transform:scaleX(0.9264);-webkit-text-stroke:0.1px #ff00ff;">2019-02-15_006Cycle</div>
<div class="t" style="left:960.70px;top:556.94px;font-size:12px;line-height:12px;color:#ff00ff;transform:scaleX(0.8700);-webkit-text-stroke:0.1px #ff00ff;">05</div>
<div class="t" style="left:988.90px;top:556.94px;font-size:12px;line-height:12px;color:#ff00ff;transform:scaleX(0.7048);-webkit-text-stroke:0.1px #ff00ff;">T1</div>
<div class="t" style="left:845.00px;top:575.94px;font-size:12px;line-height:12px;color:#ff00ff;transform:scaleX(0.9264);-webkit-text-stroke:0.1px #ff00ff;">2019-02-15_006Cycle</div>
<div class="t" style="left:960.70px;top:575.94px;font-size:12px;line-height:12px;color:#ff00ff;transform:scaleX(0.8700);-webkit-text-stroke:0.1px #ff00ff;">06</div>
<div class="t" style="left:988.90px;top:575.94px;font-size:12px;line-height:12px;color:#ff00ff;transform:scaleX(0.7048);-webkit-text-stroke:0.1px #ff00ff;">T1</div>
<div class="a" style="left:1px;top:805px;width:1042px;height:22px;background:#f0eeed;border-top:1px solid #a0a0a0;box-sizing:border-box"></div>
<div class="t" style="left:881.56px;top:809.92px;font-size:12.5px;line-height:12.5px;color:#000;transform:scaleX(0.9386);">Reverberation Time</div>
<div class="t" style="left:995.30px;top:809.92px;font-size:12.5px;line-height:12.5px;color:#000;transform:scaleX(0.8827);">Sabine</div>
<svg class="a" style="left:1030px;top:812px" width="13" height="15"><rect x="10" y="3" width="2" height="2" fill="#a8b6cc"/><rect x="7" y="6" width="2" height="2" fill="#a8b6cc"/><rect x="10" y="6" width="2" height="2" fill="#a8b6cc"/><rect x="4" y="9" width="2" height="2" fill="#a8b6cc"/><rect x="7" y="9" width="2" height="2" fill="#a8b6cc"/><rect x="10" y="9" width="2" height="2" fill="#a8b6cc"/><rect x="4" y="12" width="2" height="2" fill="#a8b6cc"/><rect x="7" y="12" width="2" height="2" fill="#a8b6cc"/><rect x="10" y="12" width="2" height="2" fill="#a8b6cc"/></svg>
<div class="a" style="left:0;top:0;width:1044px;height:828px;box-sizing:border-box;border:1px solid #6a6a6a;z-index:9"></div>
</body></html>
